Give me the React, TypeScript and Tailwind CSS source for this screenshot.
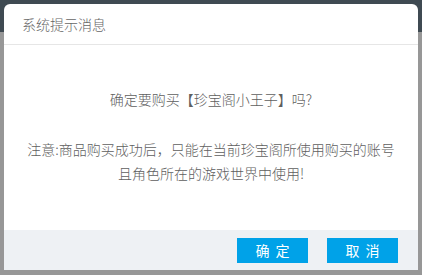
const font = "font-['Microsoft_YaHei','Noto_Sans_CJK_SC',sans-serif]";

export default function App() {
  return (
    <main
      className={`w-[422px] h-[275px] overflow-hidden bg-[linear-gradient(to_bottom,#3f4a52_0,#3f4a52_32px,#979797_32px)] pt-[4px] pl-[4px] ${font}`}
    >
      <div className="w-[414px] h-[266px] bg-white rounded-t-[6px] flex flex-col overflow-hidden">
        <header className="h-[41px] shrink-0 border-b border-[#e6e6e6] flex items-center pl-[18px]">
          <h1 className="text-[14px] text-[#666] font-light leading-none">系统提示消息</h1>
        </header>

        <section className="flex-1 flex flex-col items-center text-[14px] text-[#5e5e5e] font-light">
          <p className="mt-[42px] leading-[24px]">确定要购买【珍宝阁小王子】吗?</p>
          <p className="mt-[26px] leading-[24px] text-center">
            注意:商品购买成功后，只能在当前珍宝阁所使用购买的账号
            <br />
            且角色所在的游戏世界中使用!
          </p>
        </section>

        <footer className="h-[40px] shrink-0 bg-[#eef1f4] flex items-center justify-end gap-[19px] pr-[20px]">
          <button className="w-[71px] h-[25px] bg-[#00a2e8] text-white text-[14px] tracking-[6px] indent-[6px]">
            确定
          </button>
          <button className="w-[71px] h-[25px] bg-[#00a2e8] text-white text-[14px] tracking-[6px] indent-[6px]">
            取消
          </button>
        </footer>
      </div>
    </main>
  );
}
